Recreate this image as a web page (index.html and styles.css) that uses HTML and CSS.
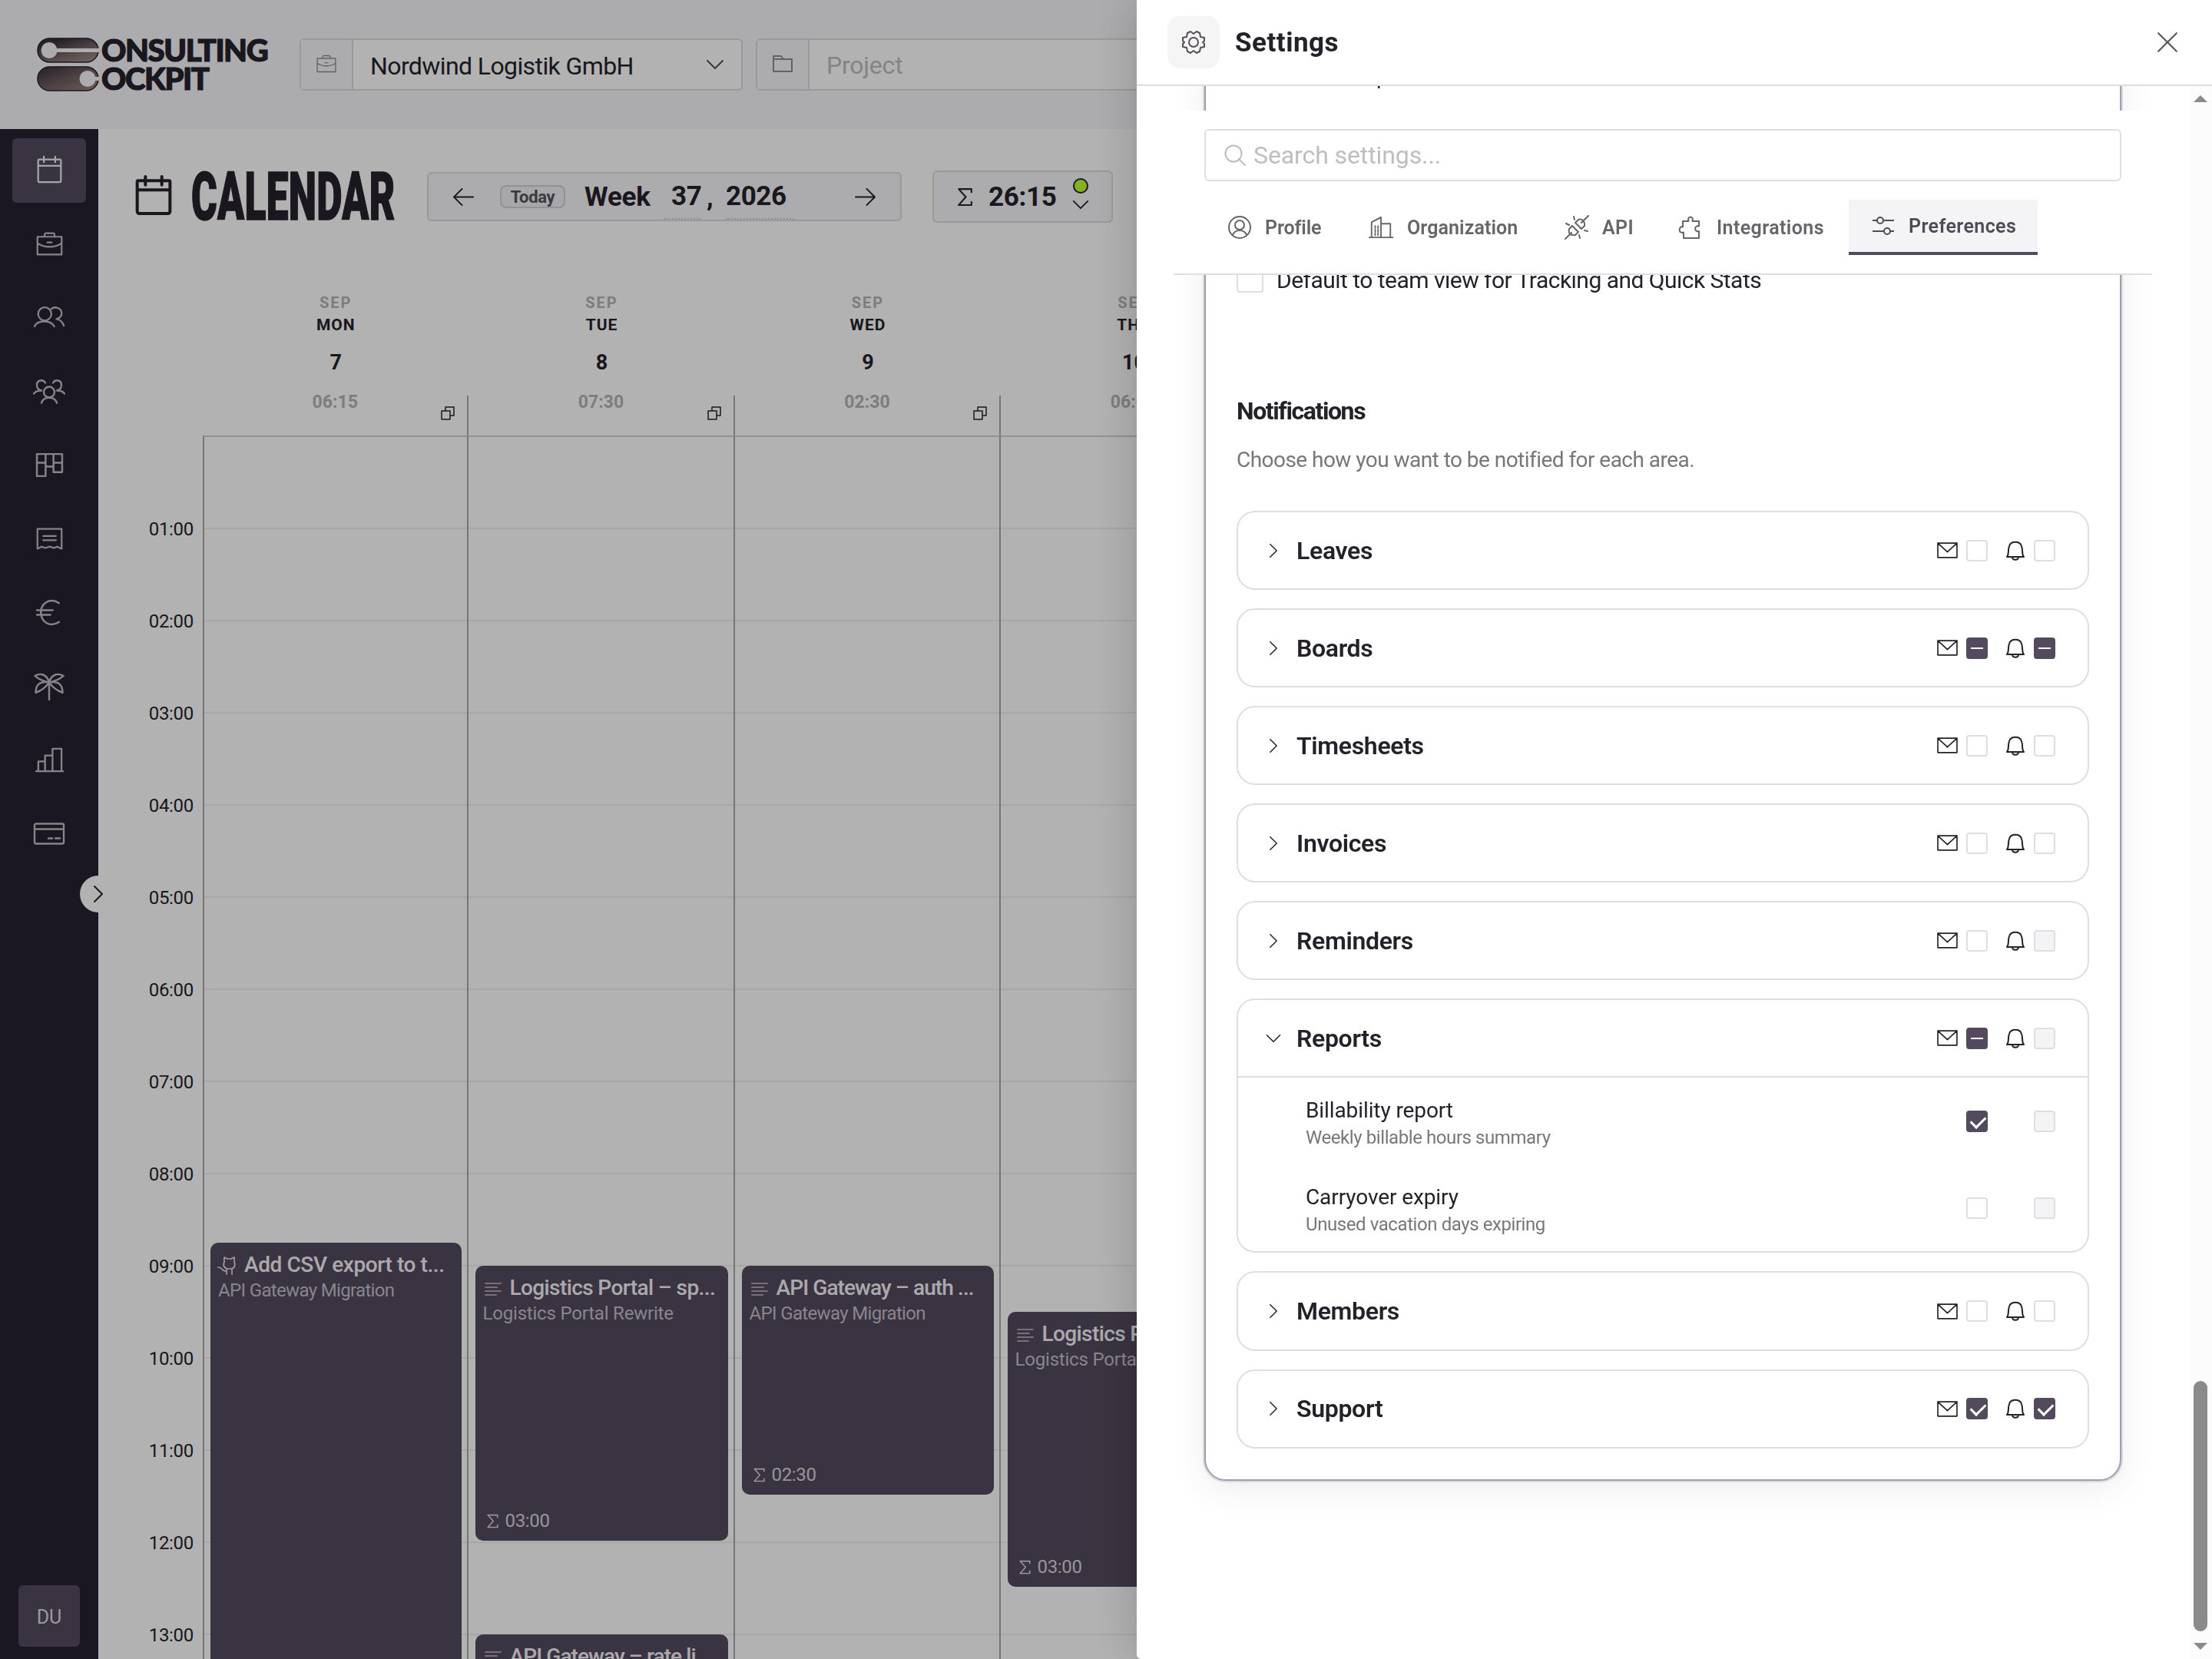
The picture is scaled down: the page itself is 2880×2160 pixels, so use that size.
FILE: index.html
```
<!DOCTYPE html>
<html lang="en">
<head>
  <meta charset="UTF-8" />
  <title>Consulting Cockpit</title>
  <link rel="stylesheet" href="styles.css">
</head>
<body>

  <svg class="sprite">
    <symbol id="calendar" viewBox="0 0 36 40"><path d="M3 6h30a1 1 0 0 1 1 1v29a2 2 0 0 1-2 2H4a2 2 0 0 1-2-2V7a1 1 0 0 1 1-1zM2 15h32M10 2v8M26 2v8"/></symbol>
    <symbol id="case" viewBox="0 0 40 36"><path d="M3 8h34v25H3zM13 8V5a2 2 0 0 1 2-2h10a2 2 0 0 1 2 2v3M3 17c10 7 24 7 34 0M17 16h6"/></symbol>
    <symbol id="users" viewBox="0 0 44 32"><path d="M2 28c4-9 22-9 27 0M25 4c5-4 14-1 14 6 0 4-3 7-7 8 4 0 8 4 10 9"/><circle cx="16" cy="11" r="9"/></symbol>
    <symbol id="team" viewBox="0 0 42 34"><circle cx="21" cy="18" r="7"/><path d="M11 32c3-9 17-9 20 0M16 6C13 1 5 2 5 9c0 4 2 6 6 7-5 0-8 1-10 4M26 6c3-5 11-4 11 3 0 4-2 6-6 7 5 0 8 1 10 4"/></symbol>
    <symbol id="board" viewBox="0 0 36 34"><path d="M2 3h32v23H23V3M2 3v28h11V3M2 14h11M23 14h11M13 19h10"/></symbol>
    <symbol id="receipt" viewBox="0 0 40 34"><path d="M3 31V3h34v28l-6-3-5 2-6-2-6 2-5-2zM11 13h18M11 19h18"/></symbol>
    <symbol id="euro" viewBox="0 0 34 36"><path d="M29 6C17-2 6 7 6 18s11 20 23 12M1 15h20M1 21h17"/></symbol>
    <symbol id="palm" viewBox="0 0 40 36"><path d="M20 13v22M20 13C17 2 8 1 2 5c6 5 12 7 18 8C7 11 3 17 3 26c6-2 13-7 17-13M20 13C23 2 32 1 38 5c-6 5-12 7-18 8 13-2 17 4 17 13-6-2-13-7-17-13"/></symbol>
    <symbol id="bars" viewBox="0 0 38 34"><path d="M1 32h36M4 32V19h9M13 32V11h10M23 32V2h12v30"/></symbol>
    <symbol id="card" viewBox="0 0 42 30"><path d="M4 2h34a2 2 0 0 1 2 2v22a2 2 0 0 1-2 2H4a2 2 0 0 1-2-2V4a2 2 0 0 1 2-2zM2 9h38M20 21h5M29 21h6"/></symbol>
    <symbol id="folder" viewBox="0 0 28 26"><path d="M2 3h10l3 4h11v16H2zM2 7h13"/></symbol>
    <symbol id="down" viewBox="0 0 24 14"><path d="M2 2l10 10L22 2"/></symbol>
    <symbol id="right" viewBox="0 0 14 24"><path d="M2 2l10 10L2 22"/></symbol>
    <symbol id="arrow-l" viewBox="0 0 30 26"><path d="M28 13H2M13 2L2 13l11 11"/></symbol>
    <symbol id="arrow-r" viewBox="0 0 30 26"><path d="M2 13h26M17 2l11 11-11 11"/></symbol>
    <symbol id="sigma" viewBox="0 0 20 24"><path d="M18 6V2H2l9 10L2 22h16v-4"/></symbol>
    <symbol id="copy" viewBox="0 0 18 18"><path d="M1 6h11v11H1zM6 6V1h11v11h-5"/></symbol>
    <symbol id="lines" viewBox="0 0 22 18"><path d="M1 2h20M1 7h15M1 12h20M1 17h14"/></symbol>
    <symbol id="cat" viewBox="0 0 24 26"><path d="M9 8V2l4 2h5l4-2v6c2 5 0 8-4 9h-5c-4-1-6-4-4-9M12 17v7M19 17v7M12 20c-6 1-5-5-11-5"/></symbol>
    <symbol id="gear" viewBox="0 0 32 32"><circle cx="16" cy="16" r="6"/><path d="M12 2l4 3 4-3 4 2 1 5 5 1v4l-2 2 2 2v4l-5 1-1 5-4 2-4-3-4 3-4-2-1-5-5-1v-4l2-2-2-2v-4l5-1 1-5z"/></symbol>
    <symbol id="close" viewBox="0 0 26 26"><path d="M2 2l22 22M24 2L2 24"/></symbol>
    <symbol id="search" viewBox="0 0 28 28"><circle cx="12" cy="12" r="10.5"/><path d="M19 19l8 8"/></symbol>
    <symbol id="profile" viewBox="0 0 32 32"><circle cx="16" cy="16" r="14"/><circle cx="16" cy="13" r="6"/><path d="M7 26c3-8 15-8 18 0"/></symbol>
    <symbol id="org" viewBox="0 0 34 32"><path d="M0 30h34M4 30V9l13-7v28M17 11h13v19M9 14v3M13 14v3M9 19v3M13 19v3M9 24v3M13 24v3"/></symbol>
    <symbol id="plug" viewBox="0 0 32 32"><path d="M1 31l8-8M22 10l9-9M10 14l8 8-4 4c-8 1-9-4-8-8zM14 10l8 8 4-4c1-6-4-10-8-8zM12 2l1 4M2 11l4 2M30 21l-4-1M20 30l-1-4"/></symbol>
    <symbol id="puzzle" viewBox="0 0 32 32"><path d="M6 8h7.500C11 .5 21 .5 18.500 8H27v6.500c-6.500-2-6.500 8.500 0 6.500v9H7v-7.500c-7 2.500-7-8.500-1-7z"/></symbol>
    <symbol id="sliders" viewBox="0 0 28 24"><path d="M0 5h6M14 5h14M0 19h15M23 19h5"/><circle cx="10" cy="5" r="4"/><circle cx="19" cy="19" r="4"/></symbol>
    <symbol id="mail" viewBox="0 0 26 20"><path d="M1 1h24v18H1zM1 1l12 11L25 1"/></symbol>
    <symbol id="bell" viewBox="0 0 26 28"><path d="M2 22c3-3 1-9 3-14C7 1 19 1 21 8c2 5 0 11 3 14zM9 22c0 5 8 5 8 0"/></symbol>
  </svg>

  <header class="topbar">
    <div class="logo">
      <svg class="logo-mark" viewBox="0 0 81 70">
        <defs>
          <linearGradient id="g1" x1="0" y1="0" x2=".7" y2="1"><stop offset=".2" stop-color="#382f3d"/><stop offset="1" stop-color="#a08982"/></linearGradient>
          <linearGradient id="g2" x1="0" y1="0" x2="1" y2="1"><stop offset="0" stop-color="#382f3d"/><stop offset="1" stop-color="#a08982"/></linearGradient>
        </defs>
        <rect x="1" y="1" width="79" height="31" rx="15.5" fill="url(#g1)" stroke="#27212f" stroke-width="1.5"/>
        <rect x="1" y="38" width="79" height="31" rx="15.5" fill="url(#g2)" stroke="#27212f" stroke-width="1.5"/>
        <path d="M24 14h57v5H24z" fill="#f7f7fb"/>
        <circle cx="16" cy="16.500" r="10.500" fill="#f7f7fb"/>
        <circle cx="66" cy="53.500" r="10.500" fill="#f7f7fb"/>
        <path d="M70 51h11v5H70z" fill="#f7f7fb"/>
      </svg>
      <div class="logo-text"><span>ONSULTING</span><span>OCKPIT</span></div>
    </div>
    <div class="field client">
      <div class="field-icon"><svg class="ico"><use href="#case"/></svg></div>
      <div class="field-value">Nordwind Logistik GmbH</div>
      <svg class="chev"><use href="#down"/></svg>
    </div>
    <div class="field project">
      <div class="field-icon"><svg class="ico"><use href="#folder"/></svg></div>
      <div class="field-value placeholder">Project</div>
    </div>
  </header>

  <div class="shell">
    <nav class="sidebar">
      <a class="nav-item active"><svg><use href="#calendar"/></svg></a>
      <a class="nav-item"><svg><use href="#case"/></svg></a>
      <a class="nav-item wide"><svg><use href="#users"/></svg></a>
      <a class="nav-item wide"><svg><use href="#team"/></svg></a>
      <a class="nav-item"><svg><use href="#board"/></svg></a>
      <a class="nav-item"><svg><use href="#receipt"/></svg></a>
      <a class="nav-item"><svg><use href="#euro"/></svg></a>
      <a class="nav-item wide"><svg><use href="#palm"/></svg></a>
      <a class="nav-item"><svg><use href="#bars"/></svg></a>
      <a class="nav-item wide"><svg><use href="#card"/></svg></a>
      <div class="avatar">DU</div>
      <button class="toggle"><svg><use href="#right"/></svg></button>
    </nav>

    <main class="main">
      <div class="title-row">
        <svg class="title-icon"><use href="#calendar"/></svg>
        <h1><span>CALENDAR</span></h1>
        <div class="week-nav">
          <svg class="arrow"><use href="#arrow-l"/></svg>
          <span class="today">Today</span>
          <span class="week-word">Week</span>
          <span class="pick week-no">37</span>
          <span class="comma">,</span>
          <span class="pick week-year">2026</span>
          <svg class="arrow next"><use href="#arrow-r"/></svg>
        </div>
        <div class="sum-box">
          <svg class="sigma"><use href="#sigma"/></svg>
          <span>26:15</span>
          <div class="status"><i></i><svg><use href="#down"/></svg></div>
        </div>
      </div>

      <div class="calendar">
        <div class="hours">
          <span>01:00</span><span>02:00</span><span>03:00</span><span>04:00</span><span>05:00</span><span>06:00</span><span>07:00</span><span>08:00</span><span>09:00</span><span>10:00</span><span>11:00</span><span>12:00</span><span>13:00</span>
        </div>

        <section class="day">
          <div class="day-head">
            <small>SEP</small><b>MON</b><strong>7</strong>
            <div class="day-foot"><span>06:15</span><svg><use href="#copy"/></svg></div>
          </div>
          <div class="slots first">
            <article class="event s35">
              <h4><svg class="cat"><use href="#cat"/></svg>Add CSV export to t...</h4>
              <p>API Gateway Migration</p>
            </article>
          </div>
        </section>

        <section class="day">
          <div class="day-head">
            <small>SEP</small><b>TUE</b><strong>8</strong>
            <div class="day-foot"><span>07:30</span><svg><use href="#copy"/></svg></div>
          </div>
          <div class="slots">
            <article class="event portal s36">
              <h4><svg><use href="#lines"/></svg>Logistics Portal – sp...</h4>
              <p>Logistics Portal Rewrite</p>
              <footer><svg><use href="#sigma"/></svg>03:00</footer>
            </article>
            <article class="event gateway s52">
              <h4><svg><use href="#lines"/></svg>API Gateway – rate li...</h4>
            </article>
          </div>
        </section>

        <section class="day">
          <div class="day-head">
            <small>SEP</small><b>WED</b><strong>9</strong>
            <div class="day-foot"><span>02:30</span><svg><use href="#copy"/></svg></div>
          </div>
          <div class="slots">
            <article class="event gateway s36 short">
              <h4><svg><use href="#lines"/></svg>API Gateway – auth ...</h4>
              <p>API Gateway Migration</p>
              <footer><svg><use href="#sigma"/></svg>02:30</footer>
            </article>
          </div>
        </section>

        <section class="day">
          <div class="day-head">
            <small>SEP</small><b>THU</b><strong>10</strong>
            <div class="day-foot"><span>06:00</span><svg><use href="#copy"/></svg></div>
          </div>
          <div class="slots">
            <article class="event portal s38">
              <h4><svg><use href="#lines"/></svg>Logistics Portal – re...</h4>
              <p>Logistics Portal Rewrite</p>
              <footer><svg><use href="#sigma"/></svg>03:00</footer>
            </article>
          </div>
        </section>
      </div>
    </main>
  </div>

  <div class="overlay"></div>

  <aside class="drawer">
    <header class="drawer-head">
      <div class="drawer-icon"><svg><use href="#gear"/></svg></div>
      <h2>Settings</h2>
      <svg class="close"><use href="#close"/></svg>
    </header>

    <div class="drawer-body">
      <div class="panel">
        <div class="prev-label">p</div>
        <label class="team-view"><i class="cb big"></i><span>Default to team view for Tracking and Quick Stats</span></label>
        <h3>Notifications</h3>
        <p class="hint">Choose how you want to be notified for each area.</p>

        <div class="groups">
          <div class="group"><div class="group-head"><svg class="caret"><use href="#right"/></svg><span>Leaves</span><svg class="mail"><use href="#mail"/></svg><i class="cb"></i><svg class="bell"><use href="#bell"/></svg><i class="cb"></i></div></div>
          <div class="group"><div class="group-head"><svg class="caret"><use href="#right"/></svg><span>Boards</span><svg class="mail"><use href="#mail"/></svg><i class="cb some"></i><svg class="bell"><use href="#bell"/></svg><i class="cb some"></i></div></div>
          <div class="group"><div class="group-head"><svg class="caret"><use href="#right"/></svg><span>Timesheets</span><svg class="mail"><use href="#mail"/></svg><i class="cb"></i><svg class="bell"><use href="#bell"/></svg><i class="cb"></i></div></div>
          <div class="group"><div class="group-head"><svg class="caret"><use href="#right"/></svg><span>Invoices</span><svg class="mail"><use href="#mail"/></svg><i class="cb"></i><svg class="bell"><use href="#bell"/></svg><i class="cb"></i></div></div>
          <div class="group"><div class="group-head"><svg class="caret"><use href="#right"/></svg><span>Reminders</span><svg class="mail"><use href="#mail"/></svg><i class="cb"></i><svg class="bell"><use href="#bell"/></svg><i class="cb off"></i></div></div>
          <div class="group open">
            <div class="group-head"><svg class="caret"><use href="#down"/></svg><span>Reports</span><svg class="mail"><use href="#mail"/></svg><i class="cb some"></i><svg class="bell"><use href="#bell"/></svg><i class="cb off"></i></div>
            <div class="option">
              <div><b>Billability report</b><small>Weekly billable hours summary</small></div>
              <i class="cb on"></i><i class="cb off"></i>
            </div>
            <div class="option">
              <div><b>Carryover expiry</b><small>Unused vacation days expiring</small></div>
              <i class="cb"></i><i class="cb off"></i>
            </div>
          </div>
          <div class="group"><div class="group-head"><svg class="caret"><use href="#right"/></svg><span>Members</span><svg class="mail"><use href="#mail"/></svg><i class="cb"></i><svg class="bell"><use href="#bell"/></svg><i class="cb"></i></div></div>
          <div class="group"><div class="group-head"><svg class="caret"><use href="#right"/></svg><span>Support</span><svg class="mail"><use href="#mail"/></svg><i class="cb on"></i><svg class="bell"><use href="#bell"/></svg><i class="cb on"></i></div></div>
        </div>
      </div>

      <div class="sticky">
        <div class="search"><svg><use href="#search"/></svg><span>Search settings...</span></div>
        <div class="tabs">
          <a class="tab profile"><svg><use href="#profile"/></svg><span>Profile</span></a>
          <a class="tab organization"><svg><use href="#org"/></svg><span>Organization</span></a>
          <a class="tab api"><svg><use href="#plug"/></svg><span>API</span></a>
          <a class="tab integrations"><svg><use href="#puzzle"/></svg><span>Integrations</span></a>
          <a class="tab preferences active"><svg><use href="#sliders"/></svg><span>Preferences</span></a>
        </div>
      </div>

      <div class="scrollbar"><i class="up"></i><i class="thumb"></i><i class="dn"></i></div>
    </div>
  </aside>

</body>
</html>
```
FILE: styles.css
```
* {
  box-sizing: border-box;
  margin: 0;
  padding: 0;
}
body {
  width: 2880px;
  height: 2160px;
  overflow: hidden;
  font-family: Roboto, "Liberation Sans", sans-serif;
  letter-spacing: -0.02em;
  color: #26222b;
  background: #fff;
}
svg {
  fill: none;
  stroke: currentColor;
  stroke-width: 2;
  stroke-linecap: round;
  stroke-linejoin: round;
  flex: none;
}
.sprite {
  position: absolute;
  width: 0;
  height: 0;
}

/* top bar */
.topbar {
  display: flex;
  align-items: flex-start;
  height: 168px;
  padding: 50px 0 0 48px;
  background: #f7f7fb;
}
.logo {
  display: flex;
  width: 342px;
  gap: 3px;
  margin-top: -1px;
}
.logo-mark {
  width: 81px;
  height: 70px;
  stroke: none;
}
.logo-text {
  display: flex;
  flex-direction: column;
  font-family: Lato, sans-serif;
  font-weight: 900;
  font-size: 40px;
  line-height: 37px;
  letter-spacing: -1.4px;
  margin-top: -2px;
  -webkit-text-stroke: 1.2px #26222b;
}
.field {
  display: flex;
  align-items: center;
  height: 68px;
  border: 2px solid #dcdce0;
  border-radius: 6px;
  background: #fff;
  font-size: 32px;
}
.client {
  width: 577px;
  margin-right: 17px;
}
.project {
  width: 577px;
}
.field-icon {
  display: flex;
  align-items: center;
  justify-content: center;
  width: 68px;
  height: 64px;
  background: #f7f7fb;
  border-right: 2px solid #dcdce0;
  color: #8f8e94;
}
.field-icon .ico {
  width: 28px;
  height: 26px;
  margin-bottom: 2px;
}
.field-value {
  flex: 1;
  padding: 4px 0 0 22px;
  letter-spacing: -0.6px;
}
.placeholder {
  color: #bdbdbf;
  padding-top: 1px;
  letter-spacing: -0.2px;
}
.chev {
  width: 24px;
  height: 14px;
  margin-right: 22px;
  color: #55545a;
}

/* sidebar */
.shell {
  display: flex;
  height: 1992px;
}
.sidebar {
  position: relative;
  display: flex;
  flex-direction: column;
  align-items: center;
  gap: 12px;
  width: 128px;
  padding: 12px 0 16px;
  background: #272131;
  color: #c0bec3;
}
.nav-item {
  display: flex;
  align-items: center;
  justify-content: center;
  width: 96px;
  height: 84px;
  border-radius: 6px;
}
.nav-item svg {
  width: 37px;
  height: 37px;
  margin-bottom: 1px;
  stroke-width: 2.400;
}
.nav-item.wide svg {
  width: 42px;
}
.nav-item.active {
  background: #544a5d;
  color: #eee;
}
.nav-item.active svg {
  margin-bottom: 4px;
}
.avatar {
  display: flex;
  align-items: center;
  justify-content: center;
  width: 80px;
  height: 80px;
  margin-top: auto;
  padding-top: 2px;
  border-radius: 6px;
  background: #544a5d;
  color: #dddbe0;
  font-size: 25px;
  letter-spacing: 0;
}
.toggle {
  position: absolute;
  top: 972px;
  left: 104px;
  display: flex;
  align-items: center;
  justify-content: center;
  width: 48px;
  height: 48px;
  border: none;
  border-radius: 50%;
  background: #fff;
  color: #26222b;
}
.toggle svg {
  width: 14px;
  height: 24px;
}

/* calendar page */
.main {
  flex: 1;
  display: flex;
  flex-direction: column;
}
.title-row {
  display: flex;
  align-items: center;
  height: 176px;
  padding-left: 48px;
}
.title-icon {
  width: 48px;
  height: 54px;
  margin-right: 25px;
  margin-bottom: 4px;
  stroke-width: 3;
}
h1 {
  width: 265px;
  margin-right: 42px;
  white-space: nowrap;
}
h1 span {
  display: inline-block;
  font-size: 87px;
  font-weight: 900;
  line-height: 90px;
  letter-spacing: 0.5px;
  transform: scaleX(0.592);
  transform-origin: 0 50%;
  -webkit-text-stroke: 1.5px #26222b;
}
.week-nav {
  display: flex;
  align-items: center;
  width: 618px;
  height: 64px;
  padding-left: 31px;
  border: 2px solid #dcdce0;
  border-radius: 6px;
  background: #f7f7fb;
  font-size: 35px;
  font-weight: 700;
}
.arrow {
  width: 29px;
  height: 25px;
}
.today {
  width: 85px;
  height: 30px;
  margin: 0 25px 0 33px;
  border: 2px solid #d2d2d6;
  border-radius: 8px;
  background: #efeff3;
  color: #55535c;
  font-size: 22px;
  line-height: 27px;
  text-align: center;
}
.week-word {
  width: 103px;
  letter-spacing: -0.2px;
}
.pick {
  height: 60px;
  line-height: 59px;
  border-bottom: 2px dotted #cfcfd4;
}
.week-no {
  width: 48px;
  padding-left: 10px;
}
.comma {
  width: 33px;
  padding-left: 8px;
}
.week-year {
  width: 89px;
  letter-spacing: -0.4px;
}
.next {
  margin-left: 78px;
}
.sum-box {
  display: flex;
  align-items: center;
  width: 235px;
  height: 68px;
  margin-left: 40px;
  padding-left: 30px;
  border: 2px solid #dcdce0;
  border-radius: 6px;
  background: #f7f7fb;
  font-size: 35px;
  font-weight: 700;
}
.sum-box > span {
  width: 108px;
  margin-left: 20px;
  padding-top: 1px;
}
.sigma {
  width: 21px;
  height: 25px;
}
.status {
  display: flex;
  flex-direction: column;
  align-items: center;
  gap: 8px;
  margin-top: -8px;
}
.status i {
  width: 20px;
  height: 20px;
  border: 2px solid #26222b;
  border-radius: 50%;
  background: #c0ff2e;
}
.status svg {
  width: 24px;
  height: 13px;
}

.calendar {
  flex: 1;
  display: grid;
  grid-template-columns: 136px 345.500px 347px 346px 347px;
  overflow: hidden;
}
.hours {
  display: flex;
  flex-direction: column;
  padding: 285px 12px 0 0;
  text-align: right;
  font-size: 24px;
  letter-spacing: -0.3px;
}
.hours span {
  height: 120px;
  line-height: 120px;
}
.day-head {
  display: flex;
  flex-direction: column;
  align-items: center;
  height: 223px;
  padding: 37px 0 0 1px;
  font-size: 21px;
  letter-spacing: 1px;
}
.day-head small {
  font-size: 20px;
  line-height: 26px;
  font-weight: 700;
  letter-spacing: 2px;
  color: #b4b3b8;
}
.day-head b {
  line-height: 32px;
}
.day-head strong {
  font-size: 27px;
  line-height: 32px;
  margin-top: 17px;
  letter-spacing: 0;
}
.day-foot {
  position: relative;
  width: 100%;
  height: 52px;
  margin-top: auto;
  border-right: 2px solid #aaa;
  text-align: center;
  color: #b4b3b8;
  font-size: 23px;
  font-weight: 700;
  line-height: 17px;
  letter-spacing: 0;
}
.day-foot svg {
  position: absolute;
  right: 16px;
  top: 14px;
  width: 18px;
  height: 18px;
  stroke-width: 1.500;
  color: #26222b;
}
/* one row is 15 minutes */
.slots {
  display: grid;
  grid-template-rows: repeat(60, 30px);
  height: 1600px;
  border-top: 2px solid #d0d0d4;
  border-right: 2px solid #aaa;
  background: repeating-linear-gradient(#0000 0 118px, #efeff1 118px 120px);
}
.slots.first {
  border-left: 2px solid #aaa;
}
.event {
  display: flex;
  flex-direction: column;
  margin: -1px 7px 3px 9px;
  padding: 12px 10px;
  border-radius: 10px;
  background: #544a5d;
  color: #f5f2f8;
}
.first .event {
  margin-left: 8px;
}
.s35 { grid-row: 36 / span 24; }
.s36 { grid-row: 37 / span 12; }
.s36.short { grid-row: 37 / span 10; }
.s38 { grid-row: 39 / span 12; }
.s52 { grid-row: 53 / span 8; }
.event h4 {
  display: flex;
  align-items: center;
  gap: 11px;
  font-size: 28px;
  font-weight: 500;
  line-height: 34px;
  letter-spacing: -0.4px;
  white-space: nowrap;
}
.portal h4 {
  letter-spacing: -0.6px;
}
.gateway h4 {
  letter-spacing: -0.9px;
}
.event h4 svg {
  width: 22px;
  height: 18px;
  margin: 2px 0 0 2px;
  color: #a9a2b1;
}
.event h4 .cat {
  width: 24px;
  height: 26px;
  margin-left: -1px;
  stroke-width: 1.700;
  color: #e5e2e8;
}
.event p {
  font-size: 24px;
  line-height: 32px;
  letter-spacing: -0.65px;
  color: #c4bfca;
  white-space: nowrap;
}
.portal p {
  letter-spacing: -0.2px;
}
.event footer {
  display: flex;
  align-items: center;
  gap: 8px;
  margin-top: auto;
  padding-left: 4px;
  font-size: 24px;
  line-height: 28px;
  color: #d8d4dd;
}
.event footer svg {
  width: 17px;
  height: 19px;
}

.overlay {
  position: fixed;
  inset: 0;
  background: rgba(0, 0, 0, 0.3);
}

/* settings drawer */
.drawer {
  position: fixed;
  top: 0;
  right: 0;
  width: 1400px;
  height: 2160px;
  background: #fff;
  border-bottom-left-radius: 6px;
  box-shadow: -4px 0 60px rgba(0, 0, 0, 0.18);
  color: #242128;
}
.drawer-head {
  display: flex;
  align-items: center;
  height: 112px;
  padding: 0 44px 0 40px;
  border-bottom: 2px solid #dfdfe1;
}
.drawer-icon {
  display: flex;
  align-items: center;
  justify-content: center;
  width: 68px;
  height: 68px;
  border-radius: 16px;
  background: #f5f5f6;
  color: #544f5a;
}
.drawer-icon svg {
  width: 32px;
  height: 32px;
}
h2 {
  flex: 1;
  margin-left: 20px;
  padding-top: 1px;
  font-size: 35px;
  letter-spacing: 0.5px;
}
.close {
  width: 28px;
  height: 28px;
  color: #58565b;
}
.drawer-body {
  position: relative;
  height: 2048px;
  overflow: hidden;
}
.panel {
  width: 1194px;
  margin: -40px 0 0 88px;
  padding: 6px 40px 40px;
  border: 2px solid #9f9fa9;
  border-radius: 28px;
  box-shadow: 0 0 0 2px #dadae0, 0 10px 44px rgba(60, 60, 90, 0.09);
}
.prev-label {
  padding-left: 182px;
  font-size: 28px;
  line-height: 40px;
}
.team-view {
  display: flex;
  align-items: center;
  gap: 17px;
  height: 36px;
  margin-top: 225px;
  font-size: 30px;
  letter-spacing: -0.52px;
}
.team-view span {
  padding-top: 2px;
}
h3 {
  margin-top: 134px;
  font-size: 32px;
  line-height: 40px;
  letter-spacing: -1.4px;
}
.hint {
  margin-top: 24px;
  font-size: 28px;
  line-height: 40px;
  letter-spacing: -0.54px;
  color: #77767a;
}
.groups {
  display: flex;
  flex-direction: column;
  gap: 24px;
  margin-top: 46px;
}
.group {
  border: 2px solid #dfdfe2;
  border-radius: 24px;
}
.group-head {
  display: flex;
  align-items: center;
  height: 99.1px;
  padding: 0 42px 0 35px;
}
.group-head span {
  flex: 1;
  margin-left: 19px;
  font-size: 32px;
  font-weight: 600;
}
.caret {
  width: 22px;
  height: 20px;
  stroke-width: 1.800;
}
.open .caret {
  height: 12px;
}
.mail {
  width: 27px;
  height: 21px;
  margin-right: 11px;
  stroke-width: 1.600;
}
.bell {
  width: 26px;
  height: 28px;
  margin: 0 11px 0 23px;
}
.open .group-head {
  height: 101px;
  border-bottom: 2px solid #dfdfe2;
}
.option {
  display: flex;
  align-items: center;
  height: 113px;
  padding: 0 42px 0 88px;
}
.option div {
  flex: 1;
  padding-top: 7px;
}
.option b,
.option small {
  display: block;
  font-weight: 400;
}
.option b {
  font-size: 28px;
  line-height: 36px;
  letter-spacing: -0.1px;
}
.option small {
  font-size: 24px;
  line-height: 34px;
  letter-spacing: -0.42px;
  color: #77767a;
}
.option .cb + .cb {
  margin-left: 60px;
}
.cb {
  position: relative;
  flex: none;
  width: 28px;
  height: 28px;
  border: 2px solid #dfdfe2;
  border-radius: 4px;
  background: #fff;
}
.cb.big {
  width: 35px;
  height: 36px;
}
.cb.off {
  background: #f4f4f6;
}
.cb.on,
.cb.some {
  border-color: #544a5e;
  background: #544a5e;
}
.cb.some::after {
  content: "";
  position: absolute;
  left: 4px;
  top: 11px;
  width: 16px;
  height: 2px;
  background: #fff;
}
.cb.on::after {
  content: "";
  position: absolute;
  left: 4px;
  top: 5px;
  width: 16px;
  height: 9px;
  border: solid #fff;
  border-width: 0 0 3px 3px;
  transform: rotate(-45deg);
}

.sticky {
  position: absolute;
  top: 32px;
  left: 48px;
  width: 1274px;
  height: 214px;
  padding: 24px 40px 0;
  border-bottom: 2px solid #dfdfe1;
  background: #fff;
}
.search {
  display: flex;
  align-items: center;
  height: 68px;
  padding-left: 24px;
  gap: 10px;
  border: 2px solid #dfdfe1;
  border-radius: 6px;
  color: #bebdc0;
  font-size: 32px;
  letter-spacing: -0.1px;
}
.search svg {
  width: 28px;
  height: 28px;
}
.tabs {
  display: flex;
  align-items: flex-end;
  height: 96px;
}
.tab {
  display: flex;
  align-items: center;
  height: 72px;
  padding-left: 30px;
  font-size: 25px;
  font-weight: 600;
  letter-spacing: 0.4px;
  color: #66656a;
  white-space: nowrap;
}
.tab svg {
  width: 32px;
  height: 32px;
  margin-right: 17px;
}
.profile {
  width: 184px;
  letter-spacing: -0.1px;
}
.organization {
  width: 255px;
  letter-spacing: 0.1px;
}
.organization svg { margin-right: 18px; }
.api { width: 148px; }
.integrations { width: 252px; }
.integrations svg { margin-right: 18px; }
.preferences { width: 246px; }
.tab.active {
  padding-left: 31px;
  border-bottom: 4px solid #544a5e;
  background: #f4f4f6;
  color: #4f4b56;
}
.preferences svg {
  width: 28px;
  height: 24px;
  margin-right: 19px;
}

.scrollbar {
  position: absolute;
  top: 0;
  right: 0;
  display: flex;
  flex-direction: column;
  align-items: center;
  width: 30px;
  height: 2048px;
  padding: 12px 0;
  background: #fcfcfc;
}
.thumb {
  width: 18px;
  height: 326px;
  margin: auto 0 15px;
  border-radius: 9px;
  background: #8a8a8a;
}
.up,
.dn {
  border: 9px solid transparent;
}
.up {
  border-top: none;
  border-bottom-color: #8a8a8a;
}
.dn {
  border-bottom: none;
  border-top-color: #8a8a8a;
}
```
